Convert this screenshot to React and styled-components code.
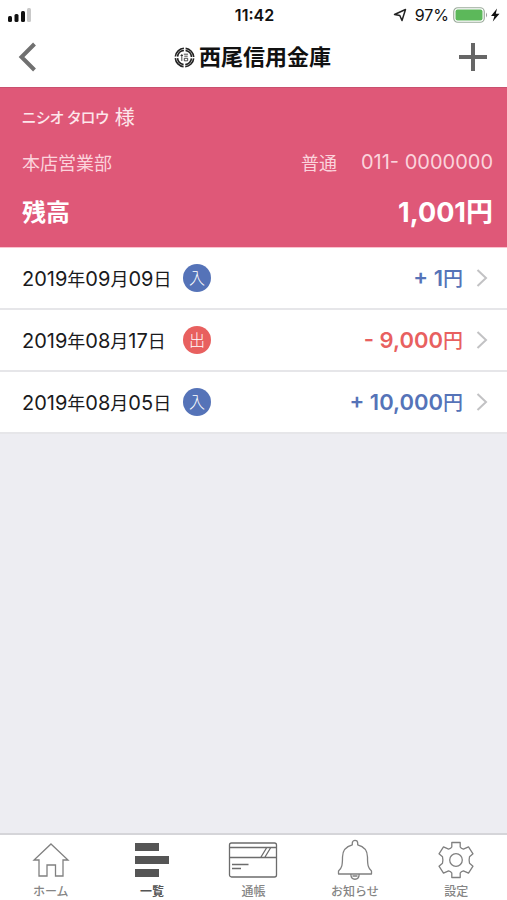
import React from 'react';
import styled, { createGlobalStyle } from 'styled-components';

const GlobalStyle = createGlobalStyle`
  * {
    box-sizing: border-box;
  }

  body {
    margin: 0;
    background: #ededf2;
    font-family: Inter, "Noto Sans CJK JP", sans-serif;
  }

  button {
    margin: 0;
    padding: 0;
    border: 0;
    background: none;
    color: inherit;
    font: inherit;
    cursor: pointer;
  }
`;

const Page = styled.div`
  display: flex;
  flex-direction: column;
  min-height: 100vh;
`;

const StatusBar = styled.div`
  display: grid;
  grid-template-columns: 1fr auto 1fr;
  align-items: center;
  height: 30px;
  padding: 0 6px 0 8px;
  background: #fff;
  color: #111;
`;

const Clock = styled.span`
  font-size: 16px;
  font-weight: 600;
`;

const StatusRight = styled.div`
  display: flex;
  align-items: center;
  justify-content: flex-end;
  gap: 4px;
  font-size: 16px;
`;

const Battery = styled.span`
  padding-left: 4px;
`;

const NavBar = styled.header`
  display: grid;
  grid-template-columns: 1fr auto 1fr;
  align-items: center;
  height: 57px;
  padding: 0 20px 3px 18px;
  background: #fff;
`;

const NavButton = styled.button`
  display: flex;
  justify-self: ${props => (props.$right ? 'end' : 'start')};
`;

const Brand = styled.h1`
  display: flex;
  align-items: center;
  gap: 4px;
  margin: 0;
  color: #111;
  font-size: 22px;
  line-height: 28px;
  font-weight: 700;
`;

const Account = styled.section`
  display: flex;
  flex-direction: column;
  height: 161px;
  padding: 16px 14px 0 22px;
  border-top: 1px solid #c9506f;
  border-bottom: 1px solid #fbc3cf;
  background: #df5878;
  color: #fff;
`;

const Holder = styled.div`
  display: flex;
  align-items: center;
  gap: 6px;
  height: 28px;
  color: #fde6eb;
  font-size: 20px;
  line-height: 28px;
`;

const Kana = styled.span`
  font-size: 15px;
  font-weight: 500;
  font-feature-settings: "palt";
`;

const AccountLine = styled.div`
  display: flex;
  align-items: center;
  justify-content: space-between;
  height: 28px;
  margin-top: 16px;
  color: #fbd3dc;
  font-size: 18px;
`;

const AccountNumber = styled.div`
  display: flex;
  align-items: center;
  gap: 24px;
`;

const Digits = styled.span`
  font-size: 20px;
`;

const Balance = styled.div`
  display: flex;
  align-items: center;
  justify-content: space-between;
  height: 36px;
  margin-top: 16px;
  font-size: 24px;
  font-weight: 700;
`;

const BalanceAmount = styled.span`
  font-size: 27px;
`;

const List = styled.ul`
  flex: 1;
  margin: 0;
  padding: 0;
  list-style: none;
`;

const Row = styled.button`
  display: grid;
  grid-template-columns: 153px 28px 1fr 12px;
  align-items: center;
  column-gap: 8px;
  width: 100%;
  height: 62px;
  padding: 0 19px 0 22px;
  border-bottom: 2px solid #e6e6e9;
  background: #fff;
  color: #1a1a1c;
  font-size: 20px;
  text-align: left;
`;

const DateText = styled.time`
  white-space: nowrap;
`;

const DateUnit = styled.span`
  font-size: 18px;
`;

const Badge = styled.span`
  display: flex;
  align-items: center;
  justify-content: center;
  width: 28px;
  height: 28px;
  border-radius: 50%;
  background: ${props => props.$color};
  color: #fff;
  font-size: 16px;
  line-height: 28px;
  font-weight: 300;
`;

const Amount = styled.span`
  padding-right: 5px;
  color: ${props => props.$color};
  font-size: 22px;
  line-height: 28px;
  font-weight: 600;
  text-align: right;
`;

const Yen = styled.span`
  font-size: 20px;
  font-weight: 500;
`;

const TabBar = styled.nav`
  display: grid;
  grid-template-columns: repeat(5, 1fr);
  height: 67px;
  border-top: 2px solid #d5d5d9;
  background: #fff;
`;

const Tab = styled.button`
  display: flex;
  flex-direction: column;
  align-items: center;
  padding-top: 4px;
  color: ${props => (props.$active ? '#555' : '#858585')};
  font-size: 12px;
  line-height: 16px;
  font-weight: ${props => (props.$active ? 700 : 500)};

  svg {
    margin-bottom: 3px;
  }
`;

const BLUE = '#5573b8';
const RED = '#e8605f';

const transactions = [
  { date: ['2019', '09', '09'], type: '入', amount: '+ 1' },
  { date: ['2019', '08', '17'], type: '出', amount: '- 9,000' },
  { date: ['2019', '08', '05'], type: '入', amount: '+ 10,000' }
];

const SignalIcon = () => (
  <svg width="24" height="14" viewBox="0 0 24 14">
    <rect x="0" y="8" width="4" height="6" rx="1.5" fill="#111" />
    <rect x="6.5" y="6" width="4" height="8" rx="1.5" fill="#111" />
    <rect x="13" y="3" width="4" height="11" rx="1.5" fill="#111" />
    <rect x="19" y="0" width="4" height="14" rx="1.5" fill="#c9c9c9" />
  </svg>
);

const LocationIcon = () => (
  <svg width="14" height="14" viewBox="0 0 14 14" fill="none" stroke="#222" strokeWidth="1.5" strokeLinejoin="round">
    <path d="M1.5 6.5L12.5 1.5L9 12.5L6.8 7.5Z" />
  </svg>
);

const BatteryIcon = () => (
  <svg width="48" height="16" viewBox="0 0 48 16">
    <rect x="0.75" y="0.75" width="30.5" height="14.5" rx="4" fill="#fff" stroke="#9aaa9a" strokeWidth="1.2" />
    <rect x="2.5" y="2.5" width="27" height="11" rx="2" fill="#5cb85a" />
    <path d="M33 5.5Q35.2 8 33 10.5Z" fill="#999" />
    <path d="M44 1.5L38 9H41.4L39.8 14.5L46.5 6.8H42.8Z" fill="#111" />
  </svg>
);

const BackIcon = () => (
  <svg width="20" height="30" viewBox="0 0 20 30" fill="none" stroke="#707070" strokeWidth="4">
    <path d="M16.5 2L3.5 15L16.5 28" />
  </svg>
);

const PlusIcon = () => (
  <svg width="28" height="28" viewBox="0 0 28 28" stroke="#666" strokeWidth="4">
    <path d="M14 0V28M0 14H28" />
  </svg>
);

const Emblem = () => (
  <svg width="21" height="21" viewBox="0 0 21 21" fill="none" stroke="#222">
    <circle cx="10.5" cy="10.5" r="9.2" strokeWidth="1.6" strokeDasharray="12.7 1.75" strokeDashoffset="-0.87" />
    <circle cx="10.5" cy="10.5" r="7" strokeWidth="1.6" strokeDasharray="9.3 1.7" strokeDashoffset="-0.85" />
    <path d="M7.8 7V14M6.5 8.5H9M9.8 7.2H14M10.3 9.2H13.7M10.3 11.3H13.7V13.8H10.3Z" strokeWidth="0.8" />
  </svg>
);

const ChevronIcon = () => (
  <svg width="12" height="18" viewBox="0 0 12 18" fill="none" stroke="#c2c2c4" strokeWidth="2">
    <path d="M1.5 1L10 9L1.5 17" />
  </svg>
);

const HomeIcon = () => (
  <svg width="40" height="42" viewBox="0 0 40 42" fill="none" stroke="#808080" strokeWidth="1.3">
    <path d="M20 5L37 21H32V37H24.5V26H16V37H8V21H3Z" />
  </svg>
);

const ListIcon = () => (
  <svg width="34" height="42" viewBox="0 0 34 42" fill="#555">
    <rect x="0" y="4" width="24" height="8" />
    <rect x="0" y="17" width="34" height="8" />
    <rect x="0" y="30" width="24" height="8" />
  </svg>
);

const PassbookIcon = () => (
  <svg width="50" height="42" viewBox="0 0 50 42" fill="none" stroke="#6c6c6c" strokeWidth="1.3">
    <rect x="1.5" y="4" width="47" height="34" rx="2" />
    <path d="M1.5 8.5H48.5M1.5 18.5H48.5M4 25.5H20.5M4 29.5H13M33 18L38.5 9M37 18L42.5 9" />
  </svg>
);

const BellIcon = () => (
  <svg width="36" height="42" viewBox="0 0 36 42" fill="none" stroke="#808080" strokeWidth="1.3" strokeLinejoin="round">
    <path d="M15.3 5.8V4A2.7 2.7 0 0 1 20.7 4V5.8C26.5 7.3 30.5 11.5 30.5 18C30.5 26 31 29 34.5 32V35H1.5V32C5 29 5.5 26 5.5 18C5.5 11.5 9.5 7.3 15.3 5.8Z" />
    <path d="M13.8 35C14 42 22 42 22.2 35M15.5 37H20.5" />
  </svg>
);

const GearIcon = () => (
  <svg width="38" height="42" viewBox="0 0 38 42" fill="none" stroke="#808080" strokeWidth="1.3" strokeLinejoin="round">
    <path d="M14.8 3.5H23.2V8Q24 9.5 26.4 10.2L31.5 7.8L36 14.8L32.5 17.8Q31.7 21 32.5 24.2L36 27.2L31.5 34.2L26.4 31.8Q24 32.5 23.2 34V38.5H14.8V34Q14 32.5 11.6 31.8L6.5 34.2L2 27.2L5.5 24.2Q6.3 21 5.5 17.8L2 14.8L6.5 7.8L11.6 10.2Q14 9.5 14.8 8Z" />
    <circle cx="19" cy="21" r="6.3" />
  </svg>
);

const tabs = [
  { label: 'ホーム', icon: HomeIcon },
  { label: '一覧', icon: ListIcon, active: true },
  { label: '通帳', icon: PassbookIcon },
  { label: 'お知らせ', icon: BellIcon },
  { label: '設定', icon: GearIcon }
];

function App() {
  return (
    <Page lang="ja">
      <GlobalStyle />
      <StatusBar>
        <SignalIcon />
        <Clock>11:42</Clock>
        <StatusRight>
          <LocationIcon />
          <Battery>97%</Battery>
          <BatteryIcon />
        </StatusRight>
      </StatusBar>

      <NavBar>
        <NavButton aria-label="戻る"><BackIcon /></NavButton>
        <Brand><Emblem />西尾信用金庫</Brand>
        <NavButton $right aria-label="追加"><PlusIcon /></NavButton>
      </NavBar>

      <Account>
        <Holder><Kana>ニシオ タロウ</Kana>様</Holder>
        <AccountLine>
          <span>本店営業部</span>
          <AccountNumber>
            <span>普通</span>
            <Digits>011- 0000000</Digits>
          </AccountNumber>
        </AccountLine>
        <Balance>
          <span>残高</span>
          <BalanceAmount>1,001円</BalanceAmount>
        </Balance>
      </Account>

      <List>
        {transactions.map(item => {
          const color = item.type === '入' ? BLUE : RED
          const [year, month, day] = item.date
          return (
            <li key={item.date.join('-')}>
              <Row>
                <DateText dateTime={item.date.join('-')}>
                  {year}<DateUnit>年</DateUnit>
                  {month}<DateUnit>月</DateUnit>
                  {day}<DateUnit>日</DateUnit>
                </DateText>
                <Badge $color={color}>{item.type}</Badge>
                <Amount $color={color}>{item.amount}<Yen>円</Yen></Amount>
                <ChevronIcon />
              </Row>
            </li>
          )
        })}
      </List>

      <TabBar>
        {tabs.map(({ label, icon: Icon, active }) => (
          <Tab key={label} $active={active} aria-current={active ? 'page' : undefined}>
            <Icon />
            {label}
          </Tab>
        ))}
      </TabBar>
    </Page>
  )
}

export default App;
